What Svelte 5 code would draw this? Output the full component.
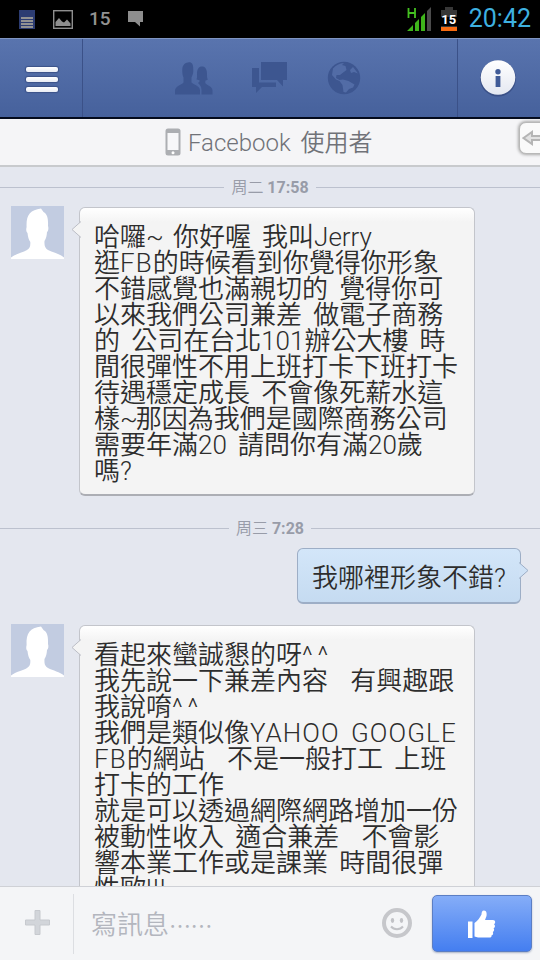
<script lang="ts">
	interface Message {
		own: boolean;
		lines: string[];
	}

	interface Group {
		day: string;
		time: string;
		messages: Message[];
	}

	const groups: Group[] = [
		{
			day: '周二',
			time: '17:58',
			messages: [
				{
					own: false,
					lines: [
						'哈囉~ 你好喔 我叫Jerry',
						'逛FB的時候看到你覺得你形象',
						'不錯感覺也滿親切的 覺得你可',
						'以來我們公司兼差 做電子商務',
						'的 公司在台北101辦公大樓 時',
						'間很彈性不用上班打卡下班打卡',
						'待遇穩定成長 不會像死薪水這',
						'樣~那因為我們是國際商務公司',
						'需要年滿20 請問你有滿20歲',
						'嗎?'
					]
				}
			]
		},
		{
			day: '周三',
			time: '7:28',
			messages: [
				{ own: true, lines: ['我哪裡形象不錯?'] },
				{
					own: false,
					lines: [
						'看起來蠻誠懇的呀^^',
						'我先說一下兼差內容  有興趣跟',
						'我說唷^^',
						'我們是類似像YAHOO GOOGLE',
						'FB的網站  不是一般打工 上班',
						'打卡的工作',
						'就是可以透過網際網路增加一份',
						'被動性收入 適合兼差  不會影',
						'響本業工作或是課業 時間很彈',
						'性歐!!!'
					]
				}
			]
		}
	];

	// Capitals and symbols get their own tracking between the ideographs
	function split(line: string) {
		return line.split(/([A-Z]{2,}|\^+|~|!+)/).filter(Boolean);
	}

	function kind(part: string) {
		if (/^[A-Z]{2,}$/.test(part)) return 'caps';
		if (part[0] === '^') return 'caret';
		if (part === '~') return 'tilde';
		if (part[0] === '!') return 'bang';
		return '';
	}
</script>

<div class="screen">
	<div class="status-bar">
		<div class="status-left">
			<svg width="16" height="19" viewBox="0 0 16 19">
				<rect width="16" height="19" fill="#2c3c72" />
				<path d="M2 8h12M2 11h12M2 14h12M2 17h12" stroke="#929292" stroke-width="2" />
			</svg>
			<svg class="photo" width="20" height="19" viewBox="0 0 20 19">
				<rect x="0.700" y="0.700" width="18.600" height="17.600" fill="none" stroke="#8e8e8e" stroke-width="1.400" />
				<path d="M2.500 16v-4l3.500-4 3 3.500 2 1 3-3 3.500 4V16z" fill="#8e8e8e" />
			</svg>
			<span class="count">15</span>
			<svg width="15" height="16" viewBox="0 0 15 16">
				<path d="M0 0h15v11h-3v4.500l-5-4.500H0z" fill="#8e8e8e" />
			</svg>
		</div>
		<div class="status-right">
			<svg width="25" height="24" viewBox="0 0 25 24">
				<path d="M1.500 1v10M8 1v10M1.500 6H8" stroke="#44c020" stroke-width="1.800" fill="none" />
				<path d="M0 24l6-6v6zM8 24v-8l4-4v12zM14 24V10l4-4v18z" fill="#3fb51b" />
				<path d="M20 24V4l4-4v24z" fill="#4b4b4b" />
			</svg>
			<div class="battery">
				<svg width="16" height="24" viewBox="0 0 16 24">
					<path d="M0 3h4V0h8v3h4v21H0z" fill="#373737" />
					<rect y="10" width="16" height="9" fill="#000" />
					<rect y="20" width="16" height="4" fill="#f66b12" />
				</svg>
				<span>15</span>
			</div>
			<span class="clock">20:42</span>
		</div>
	</div>

	<header class="nav">
		<button class="nav-side menu" aria-label="Menu">
			<span></span>
			<span></span>
			<span></span>
		</button>
		<div class="nav-tabs">
			<svg width="38" height="33" viewBox="0 0 38 33">
				<path d="M13 0.500c3.800-1 5.500 2 5.200 6.500.5 4-.7 6-1.700 8.500v5c2 2.500 8.500 3 8.500 8V32.500H0V29c0-5 6.500-6 8.500-8.500v-5C7.500 13 7.200 11 7.300 7.500 7.300 4 9 1 13 .5z" />
				<path d="M21.500 17.500c.8-2 .5-3.500.5-5.500 0-5 1.700-7.500 5-7.500s5 2.500 5 7.500c0 2 0 4 .8 5.500-1 .8-2 .8-2.500 1.200V21c1 2.500 7.200 3 7.200 7.500v4H26.500V28c0-3.500-1.500-5-3.500-7l1.500-1.500v-1.300z" />
			</svg>
			<svg width="36" height="32" viewBox="0 0 36 32">
				<path d="M9 0h26v18h-4v6.500L25 18H9z" />
				<path d="M0 6h7v14.500h17v4.500H10l-6 6v-6H0z" />
			</svg>
			<svg width="34" height="34" viewBox="0 0 34 34">
				<circle cx="17" cy="17" r="16.200" />
				<path class="land" d="M6 7.500C9 4 12 2.500 17 2l-2 2 3.500 1 1 4-4 3-2.500 2-3.500 0-.5 3 3.500 2 3.500-.5 5.500 1.500 6 3.500-1.500 3-4 1.500-3 3.500-2.500-.5-1-7-3-4-3.500-1.500-4-4.500zM26 6l5 6.500-4-1.500-3 1-1-3z" />
			</svg>
		</div>
		<button class="nav-side info" aria-label="Info">
			<svg width="38" height="38" viewBox="0 0 38 38">
				<defs>
					<linearGradient id="disc" x1="0" y1="0" x2="0" y2="1">
						<stop offset="0" stop-color="#fff" />
						<stop offset="1" stop-color="#e4e8f1" />
					</linearGradient>
				</defs>
				<circle cx="19" cy="19.500" r="18" fill="#3a5087" />
				<circle cx="19" cy="18.500" r="17.300" fill="url(#disc)" />
				<circle cx="19" cy="12.700" r="2.700" fill="#405b97" />
				<rect x="16.600" y="17" width="4.800" height="11" fill="#405b97" />
			</svg>
		</button>
	</header>

	<div class="title">
		<svg width="16" height="28" viewBox="0 0 16 28">
			<rect x="0.500" y="0.500" width="15" height="27" rx="2.500" fill="#acaeb2" />
			<rect x="2.500" y="5" width="11" height="17" fill="#f7f7f9" />
			<circle cx="8" cy="24.700" r="1.500" fill="#fff" />
		</svg>
		<span>Facebook 使用者</span>
		<div class="drawer-tab">
			<svg width="20" height="16" viewBox="0 0 20 16">
				<path d="M1.500 8L10 2v4h12v4H10v4z" fill="#e2e2e2" stroke="#b5b5b5" stroke-width="2" />
			</svg>
		</div>
	</div>

	<main class="thread">
		{#each groups as group}
			<div class="divider">
				<span class="day">{group.day} <b>{group.time}</b></span>
			</div>
			{#each group.messages as message}
				<div class="message" class:own={message.own}>
					{#if !message.own}
						<svg class="avatar" width="53" height="53" viewBox="0 0 53 53">
							<rect width="53" height="53" fill="#c2cce1" />
							<path
								d="M0 53v-1.500c5-4 12-5 16-7.500 3-2 3.500-4 3.300-8-1.800-3-2.300-5-2.800-9-1.500-1-1.500-4-.9-6C15 9 19 4 30 2.500l2.500 3.500c4 2 4.800 7 4.500 14 .8 2 .3 5-1 6-.3 4-.8 6-2.500 9-.3 5 .5 7 3.500 9 5 2.500 12 4 16 7.500V53z"
								fill="#fff"
							/>
						</svg>
					{/if}
					<div class="bubble">
						<svg class="tail" width="10" height="18" viewBox="0 0 10 18">
							<path d="M10 0.500L1 8.500l9 8" />
						</svg>
						{#each message.lines as line}
							<p>{#each split(line) as part}<span class={kind(part)}>{part}</span>{/each}</p>
						{/each}
					</div>
				</div>
			{/each}
		{/each}
	</main>

	<footer class="composer">
		<button class="add" aria-label="Add">
			<svg width="25" height="25" viewBox="0 0 25 25">
				<path d="M10 0.500h5v9.500h9.500v5H15v9.500h-5V15H0.500v-5H10z" fill="#d2d5da" stroke="#c6c9ce" />
			</svg>
		</button>
		<div class="field">寫訊息<span class="dots">……</span></div>
		<svg class="smiley" width="30" height="30" viewBox="0 0 30 30">
			<circle cx="15" cy="15" r="13" fill="none" stroke="#c6c7cb" stroke-width="4" />
			<ellipse cx="10.500" cy="12.500" rx="1.700" ry="2.400" fill="#c1c2c6" />
			<ellipse cx="19.500" cy="12.500" rx="1.700" ry="2.400" fill="#c1c2c6" />
			<path d="M9 18.500c3 3.500 9 3.500 12 0" fill="none" stroke="#c1c2c6" stroke-width="2" />
		</svg>
		<button class="like" aria-label="Like">
			<svg width="28" height="28" viewBox="0 0 28 28">
				<path d="M0 11.500h4.500V28H0z" />
				<path
					d="M6.500 13c3-2 5.500-5.500 7-8.500 0-2 .5-4 2.500-4 2.500 0 3 3 2.500 5.500l-1.500 4h8c2.500 0 3 3 1 4.300 1.500 1 1.300 3.200-.4 4 1 1.300.6 3-.8 3.700.8 1.500.2 3-1.300 3.500.3 1.500-.7 2-2 2H10l-3.500-1z"
				/>
			</svg>
		</button>
	</footer>
</div>

<style>
	:global(body) {
		margin: 0;
	}

	.screen {
		width: 540px;
		height: 960px;
		display: flex;
		flex-direction: column;
		overflow: hidden;
		background: #e4e7ef;
		font-family: Roboto, 'Noto Sans CJK TC', sans-serif;
	}

	button {
		border: none;
		padding: 0;
		background: none;
	}

	svg {
		display: block;
		flex: none;
	}

	.status-bar {
		flex: none;
		height: 38px;
		display: flex;
		justify-content: space-between;
		background: #000;
		padding: 0 9px 0 19px;
	}

	.status-left,
	.status-right {
		display: flex;
		align-items: center;
	}

	.photo {
		margin-left: 18px;
	}

	.count {
		width: 55px;
		padding-left: 16px;
		box-sizing: border-box;
		color: #929292;
		font-size: 19px;
		font-weight: 500;
		line-height: 38px;
	}

	.battery {
		position: relative;
		margin: 0 12px 0 9px;
	}

	.battery span {
		position: absolute;
		left: 0;
		top: 5px;
		width: 16px;
		text-align: center;
		color: #fff;
		font-size: 13px;
		font-weight: 700;
		line-height: 16px;
	}

	.clock {
		color: #3eb1e0;
		font-size: 25px;
		line-height: 38px;
	}

	.nav {
		flex: none;
		height: 81px;
		box-sizing: border-box;
		display: flex;
		border-top: 1px solid #7f95c2;
		border-bottom: 2px solid #030a1c;
		background: linear-gradient(#5974ae, #46619c);
	}

	.nav-side {
		width: 83px;
		box-sizing: border-box;
		display: flex;
		align-items: center;
		justify-content: center;
	}

	.menu {
		flex-direction: column;
		gap: 5px;
		border-right: 1px solid #3b5188;
		padding: 3px 0 0 1px;
	}

	.menu span {
		width: 32px;
		height: 5px;
		border-radius: 2px;
		background: linear-gradient(#fff, #e8ebf3);
		box-shadow: 0 0 1px 1px #3c5389;
	}

	.info {
		border-left: 1px solid #3b5188;
		padding-right: 2px;
	}

	.nav-tabs {
		flex: 1;
		display: flex;
		align-items: center;
		justify-content: center;
		gap: 39px;
		padding-right: 4px;
		fill: #3d5690;
	}

	.land {
		fill: #526ca6;
	}

	.title {
		flex: none;
		position: relative;
		height: 48px;
		box-sizing: border-box;
		display: flex;
		align-items: center;
		gap: 7px;
		padding-left: 165px;
		border-bottom: 2px solid #c8cacd;
		background: #f5f5f7;
		color: #707278;
		font-size: 24px;
		font-weight: 350;
		word-spacing: 4px;
		line-height: 46px;
	}

	.title > span {
		padding-top: 2px;
	}

	.drawer-tab {
		position: absolute;
		right: -14px;
		top: 3px;
		width: 31px;
		height: 30px;
		border: 1px solid #b8b8b8;
		border-radius: 7px;
		background: #fafafa;
		box-shadow: 0 0 3px 1px #aaa;
		display: flex;
		align-items: center;
		padding-left: 2px;
	}

	.thread {
		flex: 1;
		min-height: 0;
		overflow: hidden;
	}

	.divider {
		display: flex;
		align-items: center;
		gap: 7px;
		height: 40px;
		color: #989ca8;
	}

	.divider::before,
	.divider::after {
		content: '';
		flex: 1;
		height: 1px;
		background: #bcc1ce;
	}

	.day {
		padding-top: 2px;
		font-size: 16px;
		font-weight: 350;
		line-height: 40px;
	}

	.day b {
		font-weight: 700;
	}

	.message {
		display: flex;
		align-items: flex-start;
		padding: 0 65px 12px 11px;
	}

	.message.own {
		justify-content: flex-end;
		padding: 0 19px 21px 0;
	}

	.avatar {
		margin: -1px 15px 0 0;
	}

	.bubble {
		position: relative;
		flex: 1;
		box-sizing: border-box;
		border: 1px solid #c3c5cb;
		border-bottom: 2px solid #acaeb4;
		border-radius: 6px;
		padding: 16px 0 10px 14px;
		background: linear-gradient(#fff, #f4f4f4 14px);
		color: #2d2d2d;
		font-size: 26px;
		font-weight: 350;
		word-spacing: 4.8px;
	}

	.bubble p {
		margin: 0;
		height: 26px;
		line-height: 26px;
		white-space: pre;
	}

	.caps {
		letter-spacing: 1.1px;
	}

	.caret {
		letter-spacing: 4.6px;
	}

	.tilde {
		letter-spacing: -2px;
	}

	.bang {
		letter-spacing: 1px;
	}

	.own .bubble {
		flex: none;
		width: 224px;
		height: 56px;
		border-color: #9daec6;
		background: linear-gradient(#d3e6f9, #c5dbf1);
	}

	.tail {
		position: absolute;
		left: -9px;
		top: 13px;
		fill: #f4f4f4;
		stroke: #bcbec6;
	}

	.own .tail {
		left: auto;
		right: -9px;
		transform: scaleX(-1);
		fill: #cfe2f6;
		stroke: #9daec6;
	}

	.composer {
		flex: none;
		height: 74px;
		box-sizing: border-box;
		display: flex;
		align-items: center;
		border-top: 1px solid #cfd1d6;
		background: #f4f5f7;
		padding-right: 8px;
	}

	.add {
		width: 74px;
		height: 60px;
		box-sizing: border-box;
		display: flex;
		align-items: center;
		justify-content: center;
		border-right: 1px solid #dcdee2;
		padding: 0 0 2px 2px;
	}

	.field {
		flex: 1;
		padding: 0 0 2px 17px;
		color: #b3b6be;
		font-family: 'Noto Sans CJK TC', sans-serif;
		font-size: 26px;
		font-weight: 350;
		white-space: nowrap;
	}

	.dots {
		font-size: 22px;
		letter-spacing: -0.5px;
	}

	.smiley {
		margin: 0 20px 2px 0;
	}

	.like {
		width: 100px;
		height: 57px;
		box-sizing: border-box;
		display: flex;
		align-items: center;
		justify-content: center;
		border: 1px solid #5b7ec4;
		border-radius: 5px;
		background: linear-gradient(#85adf8, #447ef0);
		box-shadow: 0 1px 2px #aab3c6;
		fill: #fff;
	}
</style>
